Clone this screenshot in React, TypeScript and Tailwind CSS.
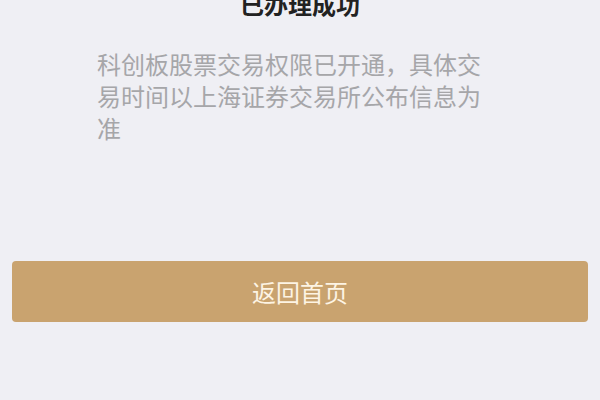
export default function App() {
  return (
    <div
      className="flex h-[400px] w-[600px] flex-col overflow-hidden bg-[#efeff4]"
      style={{ fontFamily: '"Noto Sans CJK SC", "Noto Sans", sans-serif' }}
    >
      <h1 className="-mt-[8px] text-center text-[24px] font-bold leading-[24px] text-[#222222]">
        已办理成功
      </h1>
      <p className="mt-[32px] w-[392px] pl-[97px] box-content text-[24px] leading-[32px] text-[#a6a6a9]">
        科创板股票交易权限已开通，具体交易时间以上海证券交易所公布信息为准
      </p>
      <div className="mt-[117px] px-[12px]">
        <button className="flex h-[61px] w-full items-center justify-center rounded-[4px] bg-[#c9a36f] text-[24px] text-[#fdf4e4]">
          返回首页
        </button>
      </div>
    </div>
  )
}
